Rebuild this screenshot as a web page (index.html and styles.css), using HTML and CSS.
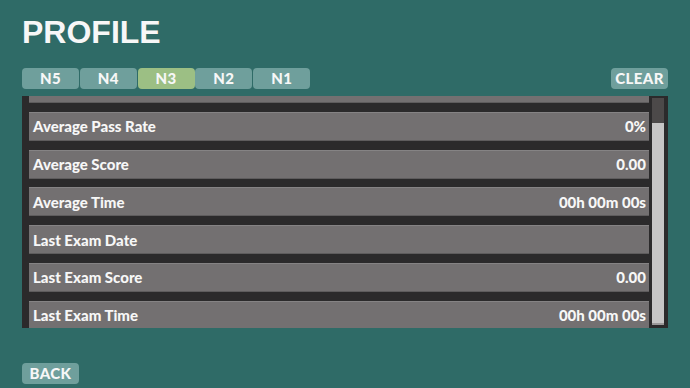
FILE: index.html
```html
<!DOCTYPE html>
<html lang="en">
<head>
  <meta charset="UTF-8" />
  <title>Profile</title>
  <link rel="stylesheet" href="styles.css">
</head>
<body>
  <div class="screen">
    <h1 class="title">PROFILE</h1>

    <div class="toolbar">
      <div class="tabs">
        <button class="tab">N5</button>
        <button class="tab">N4</button>
        <button class="tab active">N3</button>
        <button class="tab">N2</button>
        <button class="tab">N1</button>
      </div>
      <button class="tab clear-btn">CLEAR</button>
    </div>

    <div class="stats-panel">
      <div class="stats-view">
        <div class="stats-list">
          <div class="stat-row"></div>
          <div class="stat-row"><span>Average Pass Rate</span><span>0%</span></div>
          <div class="stat-row"><span>Average Score</span><span>0.00</span></div>
          <div class="stat-row"><span>Average Time</span><span>00h 00m 00s</span></div>
          <div class="stat-row"><span>Last Exam Date</span><span></span></div>
          <div class="stat-row"><span>Last Exam Score</span><span>0.00</span></div>
          <div class="stat-row"><span>Last Exam Time</span><span>00h 00m 00s</span></div>
        </div>
      </div>
      <div class="scrollbar">
        <div class="scroll-thumb"></div>
      </div>
    </div>

    <div class="footer">
      <button class="tab back-btn">BACK</button>
    </div>
  </div>
</body>
</html>
```

FILE: styles.css
```css
:root {
  --bg: #2f6b67;
  --tab: #6f9f9c;
  --tab-active: #9cbf84;
  --panel: #2b2a2b;
  --row: #737071;
  --text: #f7f7f7;
}

body, html {
  margin: 0;
  padding: 0;
  width: 690px;
  height: 388px;
  background: var(--bg);
  font-family: 'Lato', 'Liberation Sans', sans-serif;
  overflow: hidden;
}

.screen {
  display: flex;
  flex-direction: column;
  padding: 0 22px;
  height: 388px;
  box-sizing: border-box;
}

.title {
  margin: 0;
  padding-top: 14px;
  height: 54px;
  box-sizing: border-box;
  font-family: 'Liberation Sans', sans-serif;
  font-weight: 700;
  font-size: 32px;
  line-height: 36px;
  color: var(--text);
}

.toolbar {
  display: flex;
  justify-content: space-between;
  align-items: center;
  height: 21px;
  margin-top: 14px;
}

.tabs {
  display: flex;
  gap: 0.8px;
}

.tab {
  display: flex;
  align-items: center;
  justify-content: center;
  width: 57px;
  height: 21px;
  padding: 0;
  border: none;
  border-radius: 4px;
  background: var(--tab);
  color: var(--text);
  font-family: 'Lato', sans-serif;
  font-weight: 900;
  font-size: 15px;
  line-height: 1;
  letter-spacing: 0.4px;
}

.tab.active {
  background: var(--tab-active);
}

.stats-panel {
  display: flex;
  margin-top: 7px;
  height: 232px;
  background: var(--panel);
  padding-left: 7px;
}

.stats-view {
  flex: 1;
  overflow: hidden;
}

.stats-list {
  display: flex;
  flex-direction: column;
  gap: 8.8px;
  margin-top: -22px;
}

.stat-row {
  display: flex;
  justify-content: space-between;
  align-items: center;
  height: 29px;
  box-sizing: border-box;
  padding: 0 3px 0 4px;
  background: var(--row);
  border-top: 1px solid #858384;
  border-bottom: 1px solid #5e5c5d;
  color: var(--text);
  font-weight: 900;
  font-size: 15px;
}

.scrollbar {
  width: 12px;
  margin: 2px 4px 3px 3px;
  background: #4c4949;
  display: flex;
  flex-direction: column;
  justify-content: flex-end;
}

.scroll-thumb {
  height: 200px;
  background: #c6c5c5;
  border-bottom: 2px solid #9a9899;
}

.footer {
  margin-top: 35px;
}
```
